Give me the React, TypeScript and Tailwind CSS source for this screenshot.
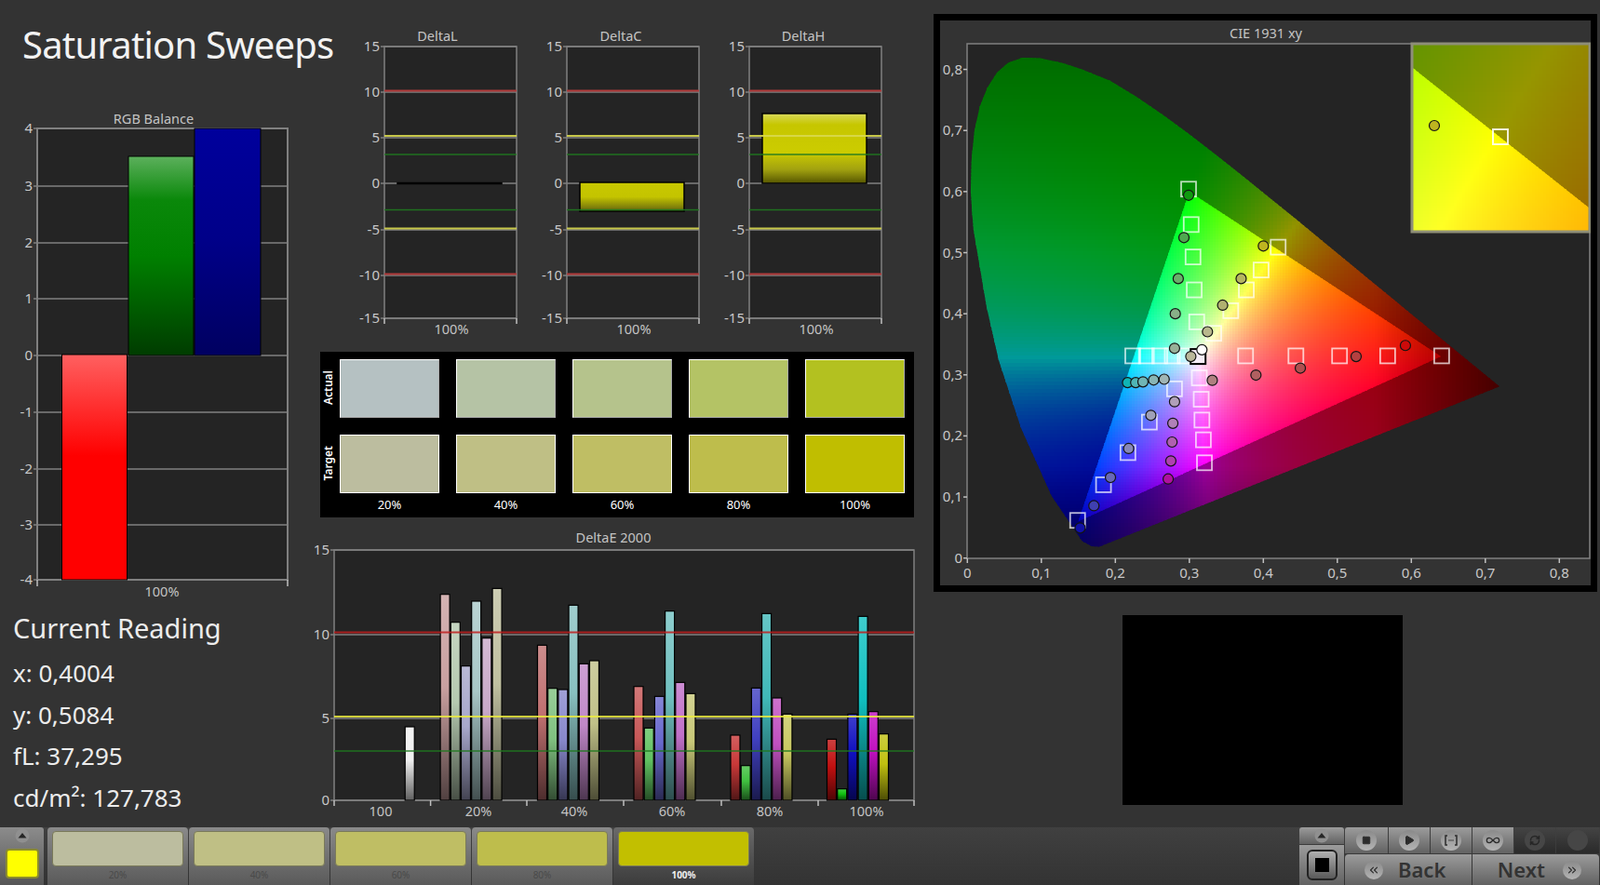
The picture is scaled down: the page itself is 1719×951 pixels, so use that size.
import { ChevronsLeft, ChevronsRight, Infinity as InfinityIcon, Play, RefreshCw, Square } from 'lucide-react';

type Pt = [number, number];

const tabs = [
  { label: '20%', color: 'bg-[#bcbd9f]' },
  { label: '40%', color: 'bg-[#bfbf85]' },
  { label: '60%', color: 'bg-[#bfbe64]' },
  { label: '80%', color: 'bg-[#bebd4c]' },
  { label: '100%', color: 'bg-[#c2bf00]', active: true },
];

const actual = ['bg-[#b5c1c2]', 'bg-[#b5c3a5]', 'bg-[#b5c38c]', 'bg-[#b4c365]', 'bg-[#b3c120]'];
const target = ['bg-[#bcbd9f]', 'bg-[#bfbf85]', 'bg-[#bfbe64]', 'bg-[#bebd4c]', 'bg-[#c0be00]'];

// spectral locus, trimmed a little to follow the plot in the software
const locus: Pt[] = [
  [0.186, 0.0224], [0.178, 0.0185], [0.168, 0.0193], [0.155, 0.028], [0.148, 0.0407], [0.114, 0.1016], [0.0726, 0.213],
  [0.0424, 0.324], [0.026, 0.411], [0.0082, 0.5384], [0.0045, 0.6], [0.0055, 0.65],
  [0.0095, 0.7], [0.017, 0.74], [0.027, 0.77], [0.04, 0.795], [0.055, 0.811], [0.0743, 0.819], [0.1, 0.818], [0.13, 0.81],
  [0.1547, 0.8], [0.1929, 0.7816], [0.2296, 0.7543], [0.2658, 0.7243], [0.3016, 0.6923], [0.3373, 0.6589], [0.3731, 0.6245],
  [0.4087, 0.5896], [0.4441, 0.5547], [0.4788, 0.5202], [0.5125, 0.4866], [0.5448, 0.4544], [0.5752, 0.4242], [0.6029, 0.3965],
  [0.627, 0.3725], [0.6658, 0.334], [0.7191, 0.2809],
];
const gamut: Pt[] = [[0.64, 0.33], [0.3, 0.6], [0.15, 0.06]];

const px = (x: number) => 1039.3 + x * 795;
const py = (y: number) => 599.7 - y * 656.4;
const toPoints = (pts: Pt[], fx: (x: number) => number, fy: (y: number) => number) =>
  pts.map(([x, y]) => `${fx(x).toFixed(1)},${fy(y).toFixed(1)}`).join(' ');

function inside(pts: Pt[], x: number, y: number) {
  let hit = false;
  for (let i = 0, j = pts.length - 1; i < pts.length; j = i++) {
    const [xi, yi] = pts[i];
    const [xj, yj] = pts[j];
    if (yi > y !== yj > y && x < ((xj - xi) * (y - yi)) / (yj - yi) + xi) hit = !hit;
  }
  return hit;
}

function xyColor(x: number, y: number, inGamut: boolean) {
  const X = x / y;
  const Z = (1 - x - y) / y;
  let r = Math.max(0, 3.2406 * X - 1.5372 - 0.4986 * Z);
  let g = Math.max(0, -0.9689 * X + 1.8758 + 0.0415 * Z);
  let b = Math.max(0, 0.0557 * X - 0.204 + 1.057 * Z);
  const max = Math.max(r, g, b);
  r /= max;
  g /= max;
  b /= max;
  let m = 1;
  if (inGamut) {
    r = Math.pow(r, 0.85);
    g = Math.pow(g, 0.85);
    b = Math.pow(b, 0.85);
  } else {
    m = 0.6 - Math.max(0, y - 0.5) * 0.55;
    if (r < 0.01) {
      g = Math.pow(g, 1.6);
      b = Math.pow(b, 1.25);
    }
  }
  if (x > 0.55) m *= 1 - ((x - 0.55) / 0.17) * 0.55;
  if (y < 0.15) m *= 1 - ((0.15 - y) / 0.1) * 0.3;
  return `rgb(${Math.round(r * m * 255)},${Math.round(g * m * 255)},${Math.round(b * m * 255)})`;
}

// one rect per cell, clipped later by the locus and the gamut polygon
function fillCells(x0: number, y0: number, w: number, h: number, cell: number, keep: Pt[] | null, inGamut: boolean, toX: (p: number) => number, toY: (p: number) => number) {
  const cells = [];
  for (let i = x0; i < x0 + w; i += cell) {
    for (let j = y0; j < y0 + h; j += cell) {
      const cx = toX(i + cell / 2);
      const cy = toY(j + cell / 2);
      if (keep) {
        const pad = (cell / 795) * 1.2;
        const near = [[0, 0], [pad, pad], [-pad, pad], [pad, -pad], [-pad, -pad]].some(([a, b]) => inside(keep, cx + a, cy + b));
        if (!near) continue;
      }
      cells.push(<rect key={`${i}-${j}`} x={i} y={j} width={cell + 0.5} height={cell + 0.5} fill={xyColor(cx, Math.max(cy, 0.001), inGamut)} shapeRendering="crispEdges" />);
    }
  }
  return cells;
}

const unX = (p: number) => (p - 1039.3) / 795;
const unY = (p: number) => (599.7 - p) / 656.4;
const outerCells = fillCells(1040, 50, 590, 550, 4, locus, false, unX, unY);
const innerCells = fillCells(1150, 200, 400, 366, 3, gamut, true, unX, unY);

// inset: same colours, window around the 100% yellow target
const insetScale = 3530;
const insetX = (p: number) => 0.3934 + (p - 1517) / insetScale;
const insetY = (p: number) => 0.533 - (p - 47) / insetScale;
const insetOuter = fillCells(1517, 47, 191, 202, 4, null, false, insetX, insetY);
const insetInner = fillCells(1517, 47, 191, 202, 3, null, true, insetX, insetY);

const squares: Pt[] = [
  [0.641, 0.331], [0.568, 0.331], [0.503, 0.331], [0.444, 0.331], [0.376, 0.331],
  [0.299, 0.604], [0.3025, 0.546], [0.305, 0.493], [0.3066, 0.439], [0.31, 0.3866],
  [0.42, 0.509], [0.397, 0.4716], [0.377, 0.439], [0.356, 0.405], [0.333, 0.368],
  [0.2235, 0.331], [0.242, 0.331], [0.26, 0.331], [0.277, 0.331], [0.2945, 0.331],
  [0.3204, 0.156], [0.319, 0.1936], [0.317, 0.226], [0.316, 0.26], [0.3135, 0.295],
  [0.149, 0.0617], [0.184, 0.12], [0.217, 0.1726], [0.246, 0.2226], [0.28, 0.277],
];

const circles: [number, number, string][] = [
  [0.299, 0.594, '#0f9a0f'], [0.2927, 0.5247, '#4fa84f'], [0.285, 0.4575, '#6aaf6a'], [0.281, 0.4, '#88b088'], [0.28, 0.3434, '#98b098'],
  [0.4, 0.511, '#bdb520'], [0.37, 0.4575, '#b5b560'], [0.345, 0.414, '#b0b070'], [0.3245, 0.3705, '#b8b88c'], [0.302, 0.33, '#bab89a'],
  [0.592, 0.348, '#cc0a0a'], [0.5254, 0.33, '#b54040'], [0.45, 0.311, '#b05050'], [0.39, 0.2996, '#b06060'], [0.331, 0.291, '#b08080'],
  [0.2714, 0.1295, '#b010a0'], [0.275, 0.159, '#b040b0'], [0.2766, 0.19, '#b060b0'], [0.2777, 0.2207, '#b080b8'], [0.28, 0.256, '#b0a0b8'],
  [0.2165, 0.2873, '#10b5b5'], [0.2275, 0.2873, '#50b5b5'], [0.2373, 0.2885, '#70b5b5'], [0.2517, 0.2916, '#88b5b5'], [0.266, 0.2928, '#a0b5b5'],
  [0.1524, 0.0493, '#1010a8'], [0.171, 0.0857, '#4040b0'], [0.1934, 0.132, '#6868b8'], [0.218, 0.1794, '#8888b8'], [0.248, 0.2337, '#9fa0b8'],
  [0.317, 0.341, '#ffffff'],
];

const deltaEBars = [
  { x: 250, top: [633], colors: ['#f0f0f0'] },
  { x: 340, top: [206, 296, 437, 228, 347, 187], colors: ['#c9a0a0', '#b5c9b0', '#a8a8cc', '#a8c8c8', '#c8a8c8', '#c0c0a0'] },
  { x: 588, top: [370, 509, 513, 241, 430, 420], colors: ['#c07070', '#80c080', '#8888cc', '#88c0c0', '#c088c8', '#c0c088'] },
  { x: 834, top: [503, 637, 535, 260, 490, 526], colors: ['#c85858', '#60c060', '#6868cc', '#70c0c0', '#c070c8', '#c8c878'] },
  { x: 1081, top: [660, 758, 508, 268, 540, 592], colors: ['#c83838', '#40c040', '#4040c0', '#40b8b8', '#c050c0', '#c8c860'] },
  { x: 1327, top: [673, 833, 592, 277, 584, 656], colors: ['#c01010', '#10c010', '#1010c0', '#10c0c0', '#c010c0', '#c0c010'] },
];

const shade = (hex: string, k: number) => {
  const n = parseInt(hex.slice(1), 16);
  const mix = (c: number) => Math.round(k <= 1 ? c * k : c + (255 - c) * (k - 1));
  return `rgb(${mix(n >> 16)},${mix((n >> 8) & 255)},${mix(n & 255)})`;
};

const tickText = 'fill-[#c8c8c8] text-[15px]';
const smallText = 'fill-[#c4c4c4] text-[14.5px]';

function RgbBalance() {
  const ticks = [[4, 138], [3, 200], [2, 261], [1, 321], [0, 382], [-1, 443], [-2, 504], [-3, 564], [-4, 623]];
  return (
    <svg width={340} height={532} viewBox="0 118 340 532" className="block">
      <defs>
        <linearGradient id="rgb-red" x1="0" y1="0" x2="0" y2="1">
          <stop offset="0" stopColor="#ff6060" />
          <stop offset="0.45" stopColor="#ff0000" />
          <stop offset="1" stopColor="#ff0000" />
        </linearGradient>
        <linearGradient id="rgb-green" x1="0" y1="0" x2="0" y2="1">
          <stop offset="0" stopColor="#5cb05c" />
          <stop offset="0.22" stopColor="#0a880a" />
          <stop offset="0.5" stopColor="#008000" />
          <stop offset="1" stopColor="#003c00" />
        </linearGradient>
        <linearGradient id="rgb-blue" x1="0" y1="0" x2="0" y2="1">
          <stop offset="0" stopColor="#00009c" />
          <stop offset="0.5" stopColor="#000088" />
          <stop offset="1" stopColor="#000060" />
        </linearGradient>
      </defs>
      <text x={165} y={133} textAnchor="middle" className={smallText}>RGB Balance</text>
      <rect x={40} y={138} width={269} height={485} fill="#242424" stroke="#808080" strokeWidth={2} />
      {ticks.map(([v, y]) => (
        <g key={v}>
          <line x1={36} x2={309} y1={y} y2={y} stroke="#808080" strokeWidth={1.5} />
          <text x={35} y={y + 5} textAnchor="end" className={tickText}>{v}</text>
        </g>
      ))}
      <rect x={138} y={168} width={70} height={214} fill="url(#rgb-green)" stroke="#000" />
      <rect x={209} y={138} width={71} height={244} fill="url(#rgb-blue)" stroke="#000" />
      <rect x={66.5} y={381} width={70} height={242} fill="url(#rgb-red)" stroke="#000" />
      <line x1={40} x2={40} y1={623} y2={630} stroke="#c0c0c0" strokeWidth={1.5} />
      <line x1={309} x2={309} y1={623} y2={630} stroke="#c0c0c0" strokeWidth={1.5} />
      <text x={174} y={641} textAnchor="middle" className={smallText}>100%</text>
    </svg>
  );
}

type DeltaProps = { left: number; title: string; titleX: number; labelX: number; bar: [number, number]; fill: string };

function DeltaChart({ left, title, titleX, labelX, bar, fill }: DeltaProps) {
  const right = left + 142;
  const ticks = [[15, 50], [10, 99], [5, 148], [0, 197], [-5, 247], [-10, 296], [-15, 342]];
  return (
    <svg width={196} height={338} viewBox={`${left - 39} 26 196 338`} className="block">
      <text x={titleX} y={44} textAnchor="middle" className={smallText}>{title}</text>
      <rect x={left} y={50} width={142} height={292} fill="#242424" stroke="#808080" strokeWidth={1.5} />
      {ticks.map(([v, y]) => (
        <g key={v}>
          <line x1={left - 4} x2={right} y1={y} y2={y} stroke="#808080" strokeWidth={1.5} />
          <text x={left - 5} y={y + 5} textAnchor="end" className={tickText}>{v}</text>
        </g>
      ))}
      <rect x={left + 14} y={bar[0]} width={112} height={bar[1] - bar[0]} fill={fill} stroke="#000" strokeWidth={1.5} />
      {[97.5, 294.5].map((y) => <line key={y} x1={left} x2={right} y1={y} y2={y} stroke="#b23a3a" strokeWidth={2} />)}
      {[146, 245.5].map((y) => <line key={y} x1={left} x2={right} y1={y} y2={y} stroke="#d8d84e" strokeOpacity={0.9} strokeWidth={2} />)}
      {[166, 225.5].map((y) => <line key={y} x1={left} x2={right} y1={y} y2={y} stroke="#1f7a1f" strokeOpacity={0.9} strokeWidth={1.5} />)}
      <line x1={left} x2={left} y1={342} y2={348} stroke="#c0c0c0" strokeWidth={1.5} />
      <line x1={right} x2={right} y1={342} y2={348} stroke="#c0c0c0" strokeWidth={1.5} />
      <text x={labelX} y={359} textAnchor="middle" className={smallText}>100%</text>
    </svg>
  );
}

function DeltaE() {
  const ticks = [[15, 591], [10, 682], [5, 772], [0, 860]];
  const marks = [359, 462.6, 566, 670, 775, 879, 982];
  const labels: [string, number][] = [['100', 409], ['20%', 514], ['40%', 617], ['60%', 722], ['80%', 827], ['100%', 931]];
  const bars = deltaEBars.flatMap((g, gi) =>
    g.top.map((top, i) => ({ id: `de-${gi}-${i}`, x: 330 + (g.x + i * 26.6) / 2.376, y: 570 + top / 3, color: g.colors[i] })),
  );
  return (
    <svg width={670} height={316} viewBox="330 568 670 316" className="block">
      <defs>
        {bars.map((b) => (
          <linearGradient key={b.id} id={b.id} x1="0" y1="0" x2="0" y2="1">
            <stop offset="0" stopColor={shade(b.color, 1.2)} />
            <stop offset="0.45" stopColor={b.color} />
            <stop offset="1" stopColor={shade(b.color, 0.4)} />
          </linearGradient>
        ))}
      </defs>
      <text x={659} y={583} textAnchor="middle" className={smallText}>DeltaE 2000</text>
      <rect x={359} y={591} width={623} height={269} fill="#242424" stroke="#808080" strokeWidth={1.5} />
      {ticks.map(([v, y]) => (
        <g key={v}>
          <line x1={355} x2={982} y1={y} y2={y} stroke="#808080" strokeWidth={1.5} />
          <text x={354} y={y + 5} textAnchor="end" className={tickText}>{v}</text>
        </g>
      ))}
      {bars.map((b) => (
        <rect key={b.id} x={b.x} y={b.y} width={10} height={860 - b.y} fill={`url(#${b.id})`} stroke="#000" strokeWidth={1.2} />
      ))}
      <line x1={359} x2={982} y1={679.5} y2={679.5} stroke="#c02020" strokeOpacity={0.85} strokeWidth={2} />
      <line x1={359} x2={982} y1={770} y2={770} stroke="#ecec40" strokeOpacity={0.85} strokeWidth={2} />
      <line x1={359} x2={982} y1={807} y2={807} stroke="#1f7a1f" strokeOpacity={0.9} strokeWidth={1.5} />
      {marks.map((x) => <line key={x} x1={x} x2={x} y1={860} y2={866} stroke="#c0c0c0" strokeWidth={1.5} />)}
      {labels.map(([t, x]) => <text key={t} x={x} y={877} textAnchor="middle" className={smallText}>{t}</text>)}
    </svg>
  );
}

function Square16({ x, y }: { x: number; y: number }) {
  return <rect x={x - 8} y={y - 8} width={16} height={16} fill="none" stroke="#ffffff" strokeOpacity={0.72} strokeWidth={1.8} />;
}

function CieChart() {
  const yTicks = [0, 1, 2, 3, 4, 5, 6, 7, 8];
  return (
    <svg width={699} height={607} viewBox="1010 22 699 607" className="block">
      <defs>
        <clipPath id="locus-clip"><polygon points={toPoints(locus, px, py)} /></clipPath>
        <clipPath id="gamut-clip"><polygon points={toPoints(gamut, px, py)} /></clipPath>
        <clipPath id="inset-clip">
          <polygon points={toPoints(gamut, (x) => 1517 + (x - 0.3934) * insetScale, (y) => 47 + (0.533 - y) * insetScale)} />
        </clipPath>
        <clipPath id="inset-box"><rect x={1517} y={47} width={191} height={202} /></clipPath>
      </defs>
      <text x={1360} y={41} textAnchor="middle" className={smallText}>CIE 1931 xy</text>
      <rect x={1039} y={47} width={669} height={553} fill="#242424" stroke="#808080" strokeWidth={1.5} />
      {yTicks.map((t) => (
        <g key={t}>
          <line x1={1035} x2={1039} y1={py(t / 10)} y2={py(t / 10)} stroke="#c0c0c0" strokeWidth={1.5} />
          <text x={1034} y={py(t / 10) + 5} textAnchor="end" className={tickText}>{t === 0 ? '0' : `0,${t}`}</text>
          <line x1={px(t / 10)} x2={px(t / 10)} y1={600} y2={605} stroke="#c0c0c0" strokeWidth={1.5} />
          <text x={px(t / 10)} y={621} textAnchor="middle" className={tickText}>{t === 0 ? '0' : `0,${t}`}</text>
        </g>
      ))}
      <g clipPath="url(#locus-clip)">{outerCells}</g>
      <g clipPath="url(#gamut-clip)">{innerCells}</g>
      {squares.map(([x, y]) => <Square16 key={`${x}-${y}`} x={px(x)} y={py(y)} />)}
      <rect x={px(0.3118) - 8} y={py(0.33) - 8} width={16} height={16} fill="#f6eef8" stroke="#000" strokeWidth={2} />
      {circles.map(([x, y, c]) => (
        <circle key={`${x}-${y}`} cx={px(x)} cy={py(y)} r={5.5} fill={c} stroke="#141414" strokeWidth={1.2} />
      ))}
      {/* zoomed inset */}
      <g clipPath="url(#inset-box)">
        {insetOuter}
        <g clipPath="url(#inset-clip)">{insetInner}</g>
      </g>
      <rect x={1517} y={47} width={191} height={202} fill="none" stroke="#8e8e78" strokeWidth={3} />
      <circle cx={1541} cy={135} r={5.5} fill="#bdb520" stroke="#141414" strokeWidth={1.2} />
      <rect x={1604} y={139} width={16} height={16} fill="none" stroke="#ffffff" strokeOpacity={0.85} strokeWidth={2} />
    </svg>
  );
}

function Knob({ children, dark = false, size = 'w-[22px] h-[22px]' }: { children?: React.ReactNode; dark?: boolean; size?: string }) {
  return (
    <span className={`flex items-center justify-center rounded-full ${size} ${dark ? 'bg-[#464646] text-[#262626]' : 'bg-linear-to-b from-[#8a8a8a] to-[#b4b4b4] text-[#2c2c2c]'}`}>
      {children}
    </span>
  );
}

function UpArrow() {
  return (
    <svg width={16} height={16} viewBox="0 0 16 16">
      <circle cx={8} cy={8} r={7.5} fill="#909090" />
      <path d="M3.5 10.5 L8 5 L12.5 10.5 Z" fill="#262626" />
    </svg>
  );
}

function ToolButton({ children, dark = false, className = '' }: { children?: React.ReactNode; dark?: boolean; className?: string }) {
  return (
    <div className={`flex items-center justify-center ${dark ? 'bg-linear-to-b from-[#444444] to-[#2a2a2a]' : 'bg-linear-to-b from-[#9c9c9c] to-[#626262]'} ${className}`}>
      {children}
    </div>
  );
}

function BottomBar() {
  return (
    <div className="flex h-[62px] items-stretch bg-linear-to-b from-[#404040] to-[#333333]">
      <div className="ml-0 flex w-[47px] flex-col items-center gap-[6px] rounded-tr-[3px] bg-linear-to-b from-[#8c8c8c] to-[#565656] pt-[1px]">
        <UpArrow />
        <div className="h-[32px] w-[36px] rounded-[4px] border-2 border-[#8c8c2c] bg-[#ffff00]" />
      </div>
      <div className="ml-[4px] flex gap-[1px]">
        {tabs.map((t) => (
          <div
            key={t.label}
            className={`flex w-[151px] flex-col items-center rounded-t-[4px] px-[5px] pt-[4px] ${t.active ? 'bg-linear-to-b from-[#6a6a6a] to-[#3c3c3c]' : 'bg-linear-to-b from-[#8a8a8a] to-[#5a5a5a]'}`}
          >
            <div className={`h-[38px] w-full rounded-[4px] border border-[#7a7a5a] ${t.color}`} />
            <span className={`mt-[2px] text-[10px] leading-[14px] ${t.active ? 'font-bold text-[#f0f0f0]' : 'text-[#4a4a4a]'}`}>{t.label}</span>
          </div>
        ))}
      </div>
      <div className="flex-1" />
      <div className="flex w-[48px] flex-col gap-[1px]">
        <ToolButton className="h-[18px] rounded-t-[3px]"><UpArrow /></ToolButton>
        <ToolButton className="flex-1">
          <div className="flex h-[33px] w-[33px] items-center justify-center rounded-[6px] border-2 border-[#222222] bg-linear-to-b from-[#b0b0b0] to-[#5a5a5a]">
            <div className="h-[15px] w-[15px] bg-black" />
          </div>
        </ToolButton>
      </div>
      <div className="ml-[1px] flex w-[273px] flex-col gap-[1px]">
        <div className="flex h-[30px] gap-[1px]">
          <ToolButton className="w-[46px] rounded-tl-[3px]"><Knob><Square size={10} fill="currentColor" /></Knob></ToolButton>
          <ToolButton className="w-[44px]"><Knob><Play size={12} fill="currentColor" /></Knob></ToolButton>
          <ToolButton className="w-[44px]">
            <Knob>
              <svg width={14} height={12} viewBox="0 0 14 12" fill="none" stroke="currentColor" strokeWidth={1.5}>
                <path d="M3 1 H1 V11 H3 M11 1 H13 V11 H11" />
                <path d="M4.5 6 H5.5 M6.5 6 H7.5 M8.5 6 H9.5" />
              </svg>
            </Knob>
          </ToolButton>
          <ToolButton className="w-[44px]"><Knob><InfinityIcon size={16} /></Knob></ToolButton>
          <ToolButton dark className="w-[44px]"><Knob dark><RefreshCw size={12} strokeWidth={3} /></Knob></ToolButton>
          <ToolButton dark className="flex-1"><Knob dark /></ToolButton>
        </div>
        <div className="flex flex-1 gap-[1px] text-[22px] font-semibold text-[#333333] [font-family:'Open_Sans',sans-serif]">
          <ToolButton className="w-[136px] justify-start gap-[16px] rounded-tl-[4px] pl-[21px]">
            <Knob size="w-[20px] h-[20px]"><ChevronsLeft size={14} /></Knob>
            <span>Back</span>
          </ToolButton>
          <ToolButton className="flex-1 justify-end gap-[19px] rounded-tr-[4px] pr-[19px]">
            <span>Next</span>
            <Knob size="w-[20px] h-[20px]"><ChevronsRight size={14} /></Knob>
          </ToolButton>
        </div>
      </div>
      <div className="w-[1px]" />
    </div>
  );
}

export default function App() {
  const yellowH = 'url(#delta-h)';
  const yellowC = 'url(#delta-c)';
  const readings = ['x: 0,4004', 'y: 0,5084', 'fL: 37,295', 'cd/m²: 127,783'];
  return (
    <div className="flex h-[951px] w-[1719px] flex-col overflow-hidden bg-[#333333] [font-family:'Noto_Sans',sans-serif]">
      <svg width={0} height={0} className="absolute">
        <defs>
          <linearGradient id="delta-h" x1="0" y1="0" x2="0" y2="1">
            <stop offset="0" stopColor="#d8d85a" />
            <stop offset="0.16" stopColor="#c6c600" />
            <stop offset="0.55" stopColor="#cccc00" />
            <stop offset="0.8" stopColor="#a2a210" />
            <stop offset="1" stopColor="#565600" />
          </linearGradient>
          <linearGradient id="delta-c" x1="0" y1="0" x2="0" y2="1">
            <stop offset="0" stopColor="#c8c800" />
            <stop offset="0.5" stopColor="#c4c400" />
            <stop offset="1" stopColor="#66660f" />
          </linearGradient>
        </defs>
      </svg>
      <div className="flex h-[889px]">
        {/* left column */}
        <div className="w-[340px] shrink-0">
          <h1 className="ml-[24px] mt-[23px] h-[95px] whitespace-nowrap text-[40px] leading-[50px] font-normal tracking-[-0.02em] text-[#f2f2f2] [font-family:'Lato',sans-serif]">Saturation Sweeps</h1>
          <RgbBalance />
          <div className="ml-[14px] mt-[5px] text-[#ececec] [font-family:'Lato',sans-serif]">
            <div className="text-[29px] leading-[40px]">Current Reading</div>
            <div className="mt-[8px] flex flex-col gap-[4.5px] text-[26px] leading-[40px]">
              {readings.map((r) => <div key={r}>{r}</div>)}
            </div>
          </div>
        </div>

        {/* middle column */}
        <div className="w-[660px] shrink-0">
          <div className="ml-[34px] mt-[26px] flex">
            <DeltaChart left={413} title="DeltaL" titleX={470} labelX={485} bar={[196.5, 197.5]} fill="#000" />
            <DeltaChart left={609} title="DeltaC" titleX={667} labelX={681} bar={[196, 227]} fill={yellowC} />
            <DeltaChart left={805} title="DeltaH" titleX={863} labelX={877} bar={[122, 197]} fill={yellowH} />
          </div>
          <div className="ml-[4px] mt-[14px] h-[178px] w-[638px] bg-black pl-[21px] pt-[8px]">
            <div className="relative grid grid-cols-[repeat(5,107px)] gap-x-[18px] gap-y-[18px]">
              {actual.map((c) => <div key={c} className={`h-[63px] border border-white border-b-[#aaaaaa] border-r-[#aaaaaa] ${c}`} />)}
              {target.map((c) => <div key={c} className={`h-[63px] border border-white ${c}`} />)}
              <span className="absolute left-[-19px] top-[12px] rotate-180 text-[12px] font-semibold leading-[14px] text-white [font-family:'DejaVu_Sans',sans-serif] [writing-mode:vertical-rl]">Actual</span>
              <span className="absolute left-[-19px] top-[93px] rotate-180 text-[12px] font-semibold leading-[14px] text-white [font-family:'DejaVu_Sans',sans-serif] [writing-mode:vertical-rl]">Target</span>
            </div>
            <div className="mt-[2px] grid grid-cols-[repeat(5,107px)] gap-x-[18px] text-center text-[13px] leading-[20px] text-white">
              {tabs.map((t) => <span key={t.label}>{t.label}</span>)}
            </div>
          </div>
          <div className="-ml-[10px] mt-[12px]"><DeltaE /></div>
        </div>

        {/* right column */}
        <div className="ml-[3px] w-[713px] shrink-0">
          <div className="mt-[15px] h-[621px] border-[7px] border-black bg-[#333333]"><CieChart /></div>
          <div className="ml-[203px] mt-[25px] h-[204px] w-[301px] bg-black" />
        </div>
      </div>
      <BottomBar />
    </div>
  );
}
